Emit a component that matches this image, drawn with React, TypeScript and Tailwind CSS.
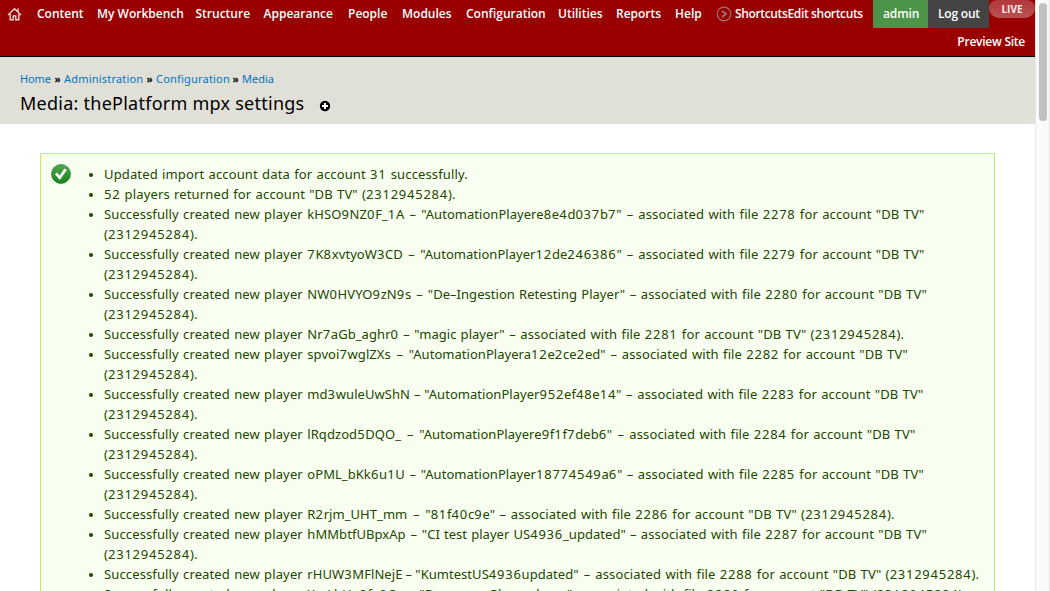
import React from "react";

const nav = [
  { label: "Content", cls: "w-[60px]" },
  { label: "My Workbench", cls: "w-[98.5px]" },
  { label: "Structure", cls: "w-[68px]" },
  { label: "Appearance", cls: "w-[84.5px]" },
  { label: "People", cls: "w-[54px]" },
  { label: "Modules", cls: "w-[64px]" },
  { label: "Configuration", cls: "w-[92px]" },
  { label: "Utilities", cls: "w-[58px]" },
  { label: "Reports", cls: "w-[59px]" },
  { label: "Help", cls: "w-[41px]" },
];

type Player = { id: string; name: string; file: number; wrap: boolean; idWidth: number; nameWidth: number };

const players: Player[] = [
  { id: "kHSO9NZ0F_1A", name: "AutomationPlayere8e4d037b7", file: 2278, wrap: true, idWidth: 114, nameWidth: 217 },
  { id: "7K8xvtyoW3CD", name: "AutomationPlayer12de246386", file: 2279, wrap: true, idWidth: 113, nameWidth: 218 },
  { id: "NW0HVYO9zN9s", name: "De–Ingestion Retesting Player", file: 2280, wrap: true, idWidth: 120.5, nameWidth: 213 },
  { id: "Nr7aGb_aghr0", name: "magic player", file: 2281, wrap: false, idWidth: 107, nameWidth: 106 },
  { id: "spvoi7wglZXs", name: "AutomationPlayera12e2ce2ed", file: 2282, wrap: true, idWidth: 101.5, nameWidth: 213 },
  { id: "md3wuleUwShN", name: "AutomationPlayer952ef48e14", file: 2283, wrap: true, idWidth: 117, nameWidth: 213 },
  { id: "lRqdzod5DQO_", name: "AutomationPlayere9f1f7deb6", file: 2284, wrap: true, idWidth: 112, nameWidth: 210 },
  { id: "oPML_bKk6u1U", name: "AutomationPlayer18774549a6", file: 2285, wrap: true, idWidth: 113.5, nameWidth: 217 },
  { id: "R2rjm_UHT_mm", name: "81f40c9e", file: 2286, wrap: false, idWidth: 118, nameWidth: 85.5 },
  { id: "hMMbtfUBpxAp", name: "CI test player US4936_updated", file: 2287, wrap: true, idWidth: 114.5, nameWidth: 219 },
  { id: "rHUW3MFlNejE", name: "KumtestUS4936updated", file: 2288, wrap: false, idWidth: 108, nameWidth: 180 },
  { id: "XmLbHe8fa0C", name: "Demomm Playerplayer", file: 2289, wrap: false, idWidth: 112, nameWidth: 163 },
];

// Digits are set slightly wider than letters.
function Spaced({ text }: { text: string }) {
  return (
    <>
      {text.split(/(\d+)/).map((part, i) =>
        i % 2 === 0 ? part : <span key={i} className="tracking-[0.75px]">{part}</span>
      )}
    </>
  );
}

function Item({ children }: { children: React.ReactNode }) {
  return (
    <li className="flex whitespace-nowrap">
      <span className="mt-[9px] mr-[11px] size-1 shrink-0 rounded-full bg-[#234600]" />
      <div>{children}</div>
    </li>
  );
}

function Dash() {
  return <span className="flex min-w-0 flex-1 justify-center">–</span>;
}

function PlayerItem({ id, name, file, wrap, idWidth, nameWidth }: Player) {
  return (
    <Item>
      <div className="flex whitespace-pre">
        <span className="w-[203.3px] shrink-0 tracking-[0.13px]">Successfully created new player </span>
        <span className="flex shrink-0 tracking-[0.06px]" style={{ width: idWidth }}>
          <span><Spaced text={id} /></span>
          <Dash />
        </span>
        <span className="flex shrink-0 tracking-[0.04px]" style={{ width: nameWidth }}>
          <span><Spaced text={`"${name}"`} /></span>
          <Dash />
        </span>
        <span className="shrink-0 tracking-[0.14px]">
          <Spaced text={`associated with file ${file} for account "DB TV"${wrap ? "" : " (2312945284)."}`} />
        </span>
      </div>
      {wrap && <div><Spaced text="(2312945284)." /></div>}
    </Item>
  );
}

export default function App() {
  return (
    <div className="flex h-[591px] w-[1050px] overflow-hidden bg-white">
      <div className="flex w-[1035px] shrink-0 flex-col">
        <header className="h-[57px] shrink-0 border-b border-black bg-[#990000] font-['Open_Sans',sans-serif] text-[12px] font-semibold leading-[28px] text-white">
          <div className="flex h-7 whitespace-nowrap">
            <svg className="mt-[7px] ml-[7px] mr-[15px] h-[14px] w-[15px] shrink-0" viewBox="0 0 15 14" fill="none" stroke="#e8d4d4" strokeWidth="1.4">
              <path d="M1 8 7.5 1.7 14 8M3.2 7v5.8h3V9h2.6v3.8h3V7M11 1.5v3" />
            </svg>
            {nav.map((n) => (
              <span key={n.label} className={n.cls}>{n.label}</span>
            ))}
            <svg className="mt-[6px] mr-[3px] size-4 shrink-0" viewBox="0 0 16 16" fill="none" stroke="#9b7777">
              <circle cx="8" cy="8" r="6.8" strokeWidth="1.2" />
              <path d="m6 5 4 3-4 3" strokeWidth="1.7" />
            </svg>
            <span className="w-[138px] tracking-[-0.35px]">ShortcutsEdit shortcuts</span>
            <span className="w-[55px] bg-[#4d9348] pl-[10px] tracking-[-0.1px]">admin</span>
            <span className="w-[61px] bg-[#444] pl-[10px] tracking-[-0.2px]">Log out</span>
            <span className="h-[18px] w-[46px] rounded-b-[10px] rounded-t-[8px] bg-linear-to-b from-[#b0383a] to-[#ba5052] text-center text-[10px] font-bold leading-[18px] text-[#f6e8e8]">LIVE</span>
          </div>
          <div className="pr-[10px] text-right tracking-[-0.25px]">Preview Site</div>
        </header>
        <div className="h-[67px] shrink-0 bg-[#e0e0d8] px-5 pt-3 font-['Noto_Sans',sans-serif]">
          <div className="flex h-5 whitespace-nowrap text-[11px] leading-5 text-[#0074bd]">
            <span className="w-[34.5px] tracking-[-0.1px]">Home</span><b className="w-[9.5px] text-[10px] text-black">»</b>
            <span className="w-[82.5px] tracking-[0.2px]">Administration</span><b className="w-[9.5px] text-[10px] text-black">»</b>
            <span className="w-[76.5px] tracking-[0.2px]">Configuration</span><b className="w-[9.5px] text-[10px] text-black">»</b>
            <span>Media</span>
          </div>
          <div className="flex items-center">
            <h1 className="w-[299px] whitespace-nowrap text-[18px] leading-7 tracking-[0.25px] text-black">Media: thePlatform mpx settings</h1>
            <svg className="mt-[6px] size-3" viewBox="0 0 12 12"><circle cx="6" cy="6" r="5.2" /><path d="M6 3v6M3 6h6" stroke="white" strokeWidth="2" /></svg>
          </div>
        </div>
        <main className="mx-10 mt-[29px] flex h-[600px] shrink-0 border border-[#bbee77] bg-[#f8fff0] pt-[10px] font-['Noto_Sans',sans-serif] text-[13px] leading-5 tracking-[0.14px] text-[#234600] [word-spacing:0.7px]">
          <svg className="ml-[10px] mr-[18px] size-5 shrink-0" viewBox="0 0 20 20">
            <defs><linearGradient id="g" x2="0" y2="1"><stop stopColor="#55a650" /><stop offset="1" stopColor="#15841a" /></linearGradient></defs>
            <circle cx="10" cy="10" r="9.5" fill="url(#g)" stroke="#287c2b" strokeWidth=".7" />
            <path d="m5 9.3 3.7 4.5L14.7 5.2" fill="none" stroke="white" strokeWidth="2.8" />
          </svg>
          <ul>
            <Item><Spaced text="Updated import account data for account 31 successfully." /></Item>
            <Item><Spaced text={'52 players returned for account "DB TV" (2312945284).'} /></Item>
            {players.map((p) => <PlayerItem key={p.id} {...p} />)}
          </ul>
        </main>
      </div>
      <aside className="w-[15px] border-x border-[#e5e5e5] bg-[#fafafa] pt-[3px] pl-[3px]">
        <div className="h-[118px] w-2 rounded-full bg-[#c1c1c1]" />
      </aside>
    </div>
  );
}
